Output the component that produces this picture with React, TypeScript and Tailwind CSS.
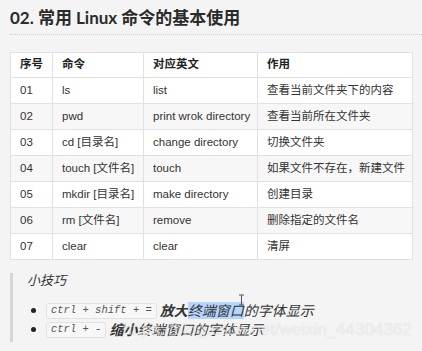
import React from "react";

type Row = [string, string, string, string];

const rows: Row[] = [
  ["01", "ls", "list", "查看当前文件夹下的内容"],
  ["02", "pwd", "print wrok directory", "查看当前所在文件夹"],
  ["03", "cd [目录名]", "change directory", "切换文件夹"],
  ["04", "touch [文件名]", "touch", "如果文件不存在，新建文件"],
  ["05", "mkdir [目录名]", "make directory", "创建目录"],
  ["06", "rm [文件名]", "remove", "删除指定的文件名"],
  ["07", "clear", "clear", "清屏"],
];

const sans = "font-['Lato','Noto_Sans_CJK_SC',sans-serif]";

function Code({ children }: { children: React.ReactNode }) {
  return (
    <code className="inline-flex h-[16px] items-center rounded-[3px] border border-[#e2e2e2] bg-[#f7f7f7] px-[4px] font-['Liberation_Mono',monospace] text-[10.5px] italic text-[#555]">
      {children}
    </code>
  );
}

export default function App() {
  return (
    <div
      className={`relative h-[351px] w-[422px] overflow-hidden bg-[#f4f4f4] px-[10px] text-[#333] ${sans}`}
    >
      {/* heading */}
      <div className="-mr-[10px] border-b border-dotted border-[#cfcfcf] pb-[5px] pt-[7px]">
        <h2 className="text-[17px] font-bold leading-[22px] text-[#2b2b2b]">
          02. 常用 Linux 命令的基本使用
        </h2>
      </div>

      <table className="mt-[17px] w-[402px] table-fixed border-collapse bg-white font-['Liberation_Sans','Noto_Sans_CJK_SC',sans-serif] text-[11.5px]">
        <colgroup>
          <col className="w-[42px]" />
          <col className="w-[91px]" />
          <col className="w-[114px]" />
          <col className="w-[155px]" />
        </colgroup>
        <thead>
          <tr className="h-[25px]">
            {["序号", "命令", "对应英文", "作用"].map((h) => (
              <th
                key={h}
                className="whitespace-nowrap border border-[#e1e1e1] px-[9px] text-left font-bold text-[#222]"
              >
                {h}
              </th>
            ))}
          </tr>
        </thead>
        <tbody>
          {rows.map((r, i) => (
            <tr
              key={r[0]}
              className={`h-[26px] ${i % 2 === 1 ? "bg-[#f7f7f7]" : "bg-white"}`}
            >
              {r.map((c, j) => (
                <td
                  key={j}
                  className="whitespace-nowrap border border-[#e1e1e1] px-[9px]"
                >
                  {c}
                </td>
              ))}
            </tr>
          ))}
        </tbody>
      </table>

      {/* tips */}
      <div className="mt-[13px] h-[69px] border-l-[3px] border-[#d6d6d6] pl-[14px]">
        <p className="text-[13px] italic leading-[14px]">小技巧</p>
        <ul className="mt-[15px] flex flex-col gap-[2px] text-[14px] italic leading-[17px]">
          <li className="flex items-center">
            <span className="ml-[4px] mr-[10px] h-[5px] w-[5px] rounded-full bg-[#222]" />
            <Code>ctrl + shift + =</Code>
            <span className="ml-[3px]">
              <b>放大</b>
              <span className="bg-[#b4d5fe]">终端窗口</span>
              的字体显示
            </span>
          </li>
          <li className="flex items-center">
            <span className="ml-[4px] mr-[10px] h-[5px] w-[5px] rounded-full bg-[#222]" />
            <Code>ctrl + -</Code>
            <span className="ml-[3px]">
              <b>缩小</b>终端窗口的字体显示
            </span>
          </li>
        </ul>
      </div>

      {/* text cursor */}
      <svg
        className="absolute left-[238px] top-[294px]"
        width="7"
        height="12"
        viewBox="0 0 7 12"
      >
        <path
          d="M1 1h2.5M3.5 1h2.5M3.5 1v10M1 11h2.5M3.5 11h2.5"
          stroke="#555"
          strokeWidth="1"
          fill="none"
        />
      </svg>

      {/* watermark */}
      <span className="pointer-events-none absolute right-[10px] top-[320px] font-['Liberation_Sans',sans-serif] text-[17px] leading-[20px] text-white/60 [text-shadow:0_0_1px_rgba(0,0,0,0.15)]">
        https://blog.csdn.net/weixin_44304362
      </span>
    </div>
  );
}
